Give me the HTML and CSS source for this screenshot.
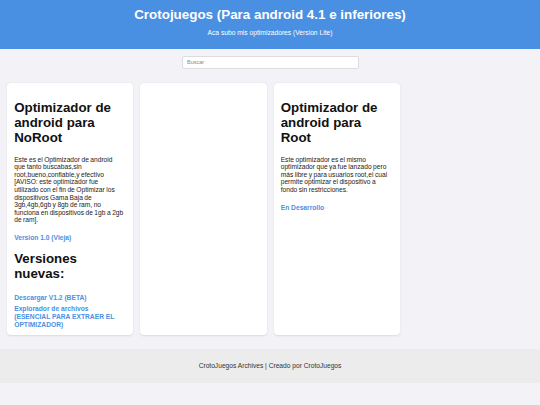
FILE: index.html
```html
<!DOCTYPE html>
<html lang="es">
<head>
<meta charset="utf-8">
<title>Crotojuegos</title>
<link rel="stylesheet" href="styles.css">
</head>
<body>
<header class="site-header">
  <h1 class="site-title">Crotojuegos (Para android 4.1 e inferiores)</h1>
  <p class="site-subtitle">Aca subo mis optimizadores (Version Lite)</p>
</header>
<div class="search-bar">
  <input class="search-input" type="text" placeholder="Buscar">
</div>
<main class="cards">
  <section class="card">
    <h2 class="card-title">Optimizador de android para NoRoot</h2>
    <p class="card-text">Este es el Optimizador de android que tanto buscabas,sin root,bueno,confiable,y efectivo [AVISO: este optimizador fue utilizado con el fin de Optimizar los dispositivos Gama Baja de 3gb,4gb,6gb y 8gb de ram, no funciona en dispositivos de 1gb a 2gb de ram].</p>
    <a class="card-link" href="#">Version 1.0 (Vieja)</a>
    <h2 class="card-title">Versiones nuevas:</h2>
    <a class="card-link first" href="#">Descargar V1.2 (BETA)</a>
    <a class="card-link tight" href="#">Explorador de archivos (ESENCIAL PARA EXTRAER EL OPTIMIZADOR)</a>
  </section>
  <section class="card"></section>
  <section class="card">
    <h2 class="card-title">Optimizador de android para Root</h2>
    <p class="card-text">Este optimizador es el mismo optimizador que ya fue lanzado pero más libre y para usuarios root,el cual permite optimizar el dispositivo a fondo sin restricciones.</p>
    <a class="card-link" href="#">En Desarrollo</a>
  </section>
</main>
<footer class="site-footer">
  <p class="footer-text">CrotoJuegos Archives | Creado por CrotoJuegos</p>
</footer>
</body>
</html>
```
FILE: styles.css
```css
html, body {
  margin: 0;
  padding: 0;
}
body {
  background: #f3f3f7;
  font-family: "Liberation Sans", Arial, sans-serif;
  color: #222;
}
.site-header {
  background: #4a90e2;
  color: #fff;
  text-align: center;
  padding: 7.3px 10px 12.6px;
}
.site-title {
  margin: 0 0 7px;
  font-size: 13.4px;
  font-weight: bold;
  line-height: normal;
}
.site-subtitle {
  margin: 0;
  font-size: 6.7px;
  line-height: normal;
}
.search-bar {
  display: flex;
  justify-content: center;
  padding: 7px 0 0;
}
.search-input {
  box-sizing: border-box;
  width: 177px;
  height: 13px;
  margin: 0 0 0 1px;
  padding: 0 4px;
  border: 1px solid #dcdce2;
  border-radius: 2px;
  background: #fff;
  font-family: "Liberation Sans", Arial, sans-serif;
  font-size: 5.5px;
  color: #333;
  outline: none;
}
.search-input::placeholder {
  color: #8a8a8a;
}
.cards {
  display: grid;
  grid-template-columns: repeat(4, 1fr);
  gap: 7px;
  padding: 14px 7px 14px;
}
.card {
  background: #fff;
  border-radius: 4px;
  box-shadow: 0 0.5px 2px rgba(0, 0, 0, 0.1);
  padding: 0 9.75px 6.5px 7.2px;
  display: flex;
  flex-direction: column;
  align-items: stretch;
}
.card-title {
  margin: 16.7px 0 0;
  font-size: 13.3px;
  font-weight: bold;
  line-height: normal;
  color: #111;
}
.card-text {
  margin: 11px 0 0;
  font-size: 6.65px;
  line-height: 7.6px;
  word-spacing: -0.35px;
  color: #222;
}
.card-link {
  display: block;
  margin-top: 10px;
  font-size: 6.7px;
  line-height: 7.9px;
  font-weight: bold;
  color: #4a90e2;
  text-decoration: none;
}
.card-title + .card-link {
  margin-top: 13px;
}
.card-link.tight {
  margin-top: 2.8px;
}
.card-link + .card-title {
  margin-top: 9.4px;
}
.site-footer {
  background: #ececec;
  text-align: center;
  padding: 13px 0;
}
.footer-text {
  margin: 0;
  font-size: 6.65px;
  line-height: 8px;
  color: #333;
}
```
